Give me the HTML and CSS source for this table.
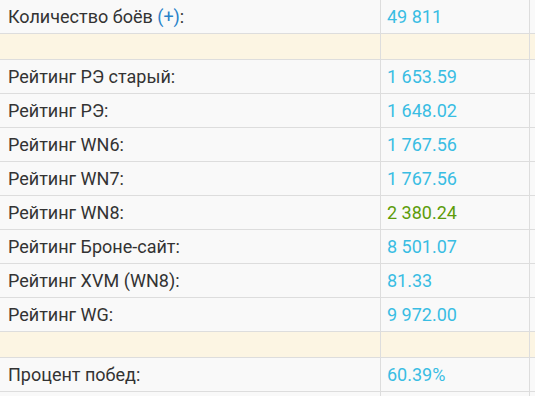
FILE: index.html
```html
<!DOCTYPE html>
<html lang="ru">
<head>
<meta charset="utf-8">
<link rel="stylesheet" href="styles.css">
</head>
<body>
<div class="stats">
  <div class="row"><div class="label">Количество боёв&nbsp;<span class="plus">(+)</span>:</div><div class="value">49 811</div><div class="extra"></div></div>
  <div class="row sep"><div class="label"></div><div class="value"></div><div class="extra"></div></div>
  <div class="row"><div class="label">Рейтинг РЭ старый:</div><div class="value">1 653.59</div><div class="extra"></div></div>
  <div class="row"><div class="label">Рейтинг РЭ:</div><div class="value">1 648.02</div><div class="extra"></div></div>
  <div class="row"><div class="label">Рейтинг WN6:</div><div class="value">1 767.56</div><div class="extra"></div></div>
  <div class="row"><div class="label">Рейтинг WN7:</div><div class="value">1 767.56</div><div class="extra"></div></div>
  <div class="row"><div class="label">Рейтинг WN8:</div><div class="value green">2 380.24</div><div class="extra"></div></div>
  <div class="row"><div class="label">Рейтинг Броне-сайт:</div><div class="value">8 501.07</div><div class="extra"></div></div>
  <div class="row"><div class="label">Рейтинг XVM (WN8):</div><div class="value">81.33</div><div class="extra"></div></div>
  <div class="row"><div class="label">Рейтинг WG:</div><div class="value">9 972.00</div><div class="extra"></div></div>
  <div class="row sep"><div class="label"></div><div class="value"></div><div class="extra"></div></div>
  <div class="row"><div class="label">Процент побед:</div><div class="value">60.39%</div><div class="extra"></div></div>
  <div class="row"><div class="label"></div><div class="value"></div><div class="extra"></div></div>
</div>
</body>
</html>
```
FILE: styles.css
```css
html, body {
  margin: 0;
  padding: 0;
  background: #f9f9f9;
  overflow: hidden;
}
.stats {
  font-family: Roboto, "Liberation Sans", sans-serif;
  font-size: 18px;
  color: #333;
}
.row {
  display: grid;
  grid-template-columns: 381px 149px 1fr;
  height: 34px;
  box-sizing: border-box;
  border-bottom: 1px solid #ddd;
  background: #f9f9f9;
}
.row.sep {
  height: 26px;
  background: #fcf5e3;
}
.label, .value, .extra {
  display: flex;
  align-items: center;
  box-sizing: border-box;
  white-space: nowrap;
}
.label {
  padding-left: 8px;
  border-right: 1px solid #ddd;
}
.value {
  padding-left: 6px;
  border-right: 1px solid #ddd;
  color: #39bde3;
}
.value.green {
  color: #5d9c0a;
}
.plus {
  color: #2a82c9;
}
```
